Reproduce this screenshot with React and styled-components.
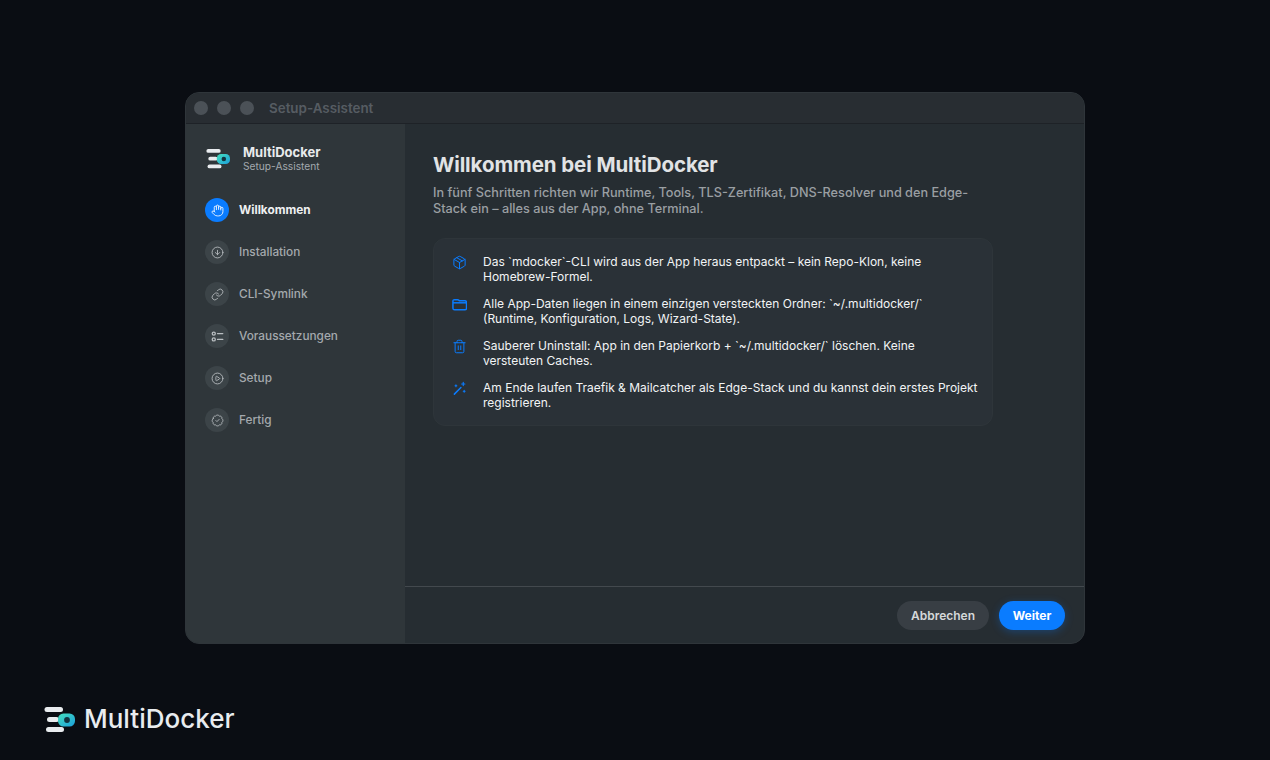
import styled, { createGlobalStyle } from "styled-components";
import {
  Hand,
  CircleArrowDown,
  Link as LinkIcon,
  CirclePlay,
  BadgeCheck,
  Package,
  Trash2,
} from "lucide-react";

// lucide has no match for these three, so they are drawn by hand
const ChecklistIcon = ({ size, strokeWidth }) => (
  <svg width={size} height={size} viewBox="0 0 16 16" fill="none" stroke="currentColor" strokeWidth={strokeWidth} strokeLinecap="round">
    <circle cx="3.4" cy="4.4" r="1.9" />
    <circle cx="3.4" cy="11.6" r="1.9" />
    <path d="M8 4.4h6.5M8 11.6h6.5" />
  </svg>
);

const FolderIcon = ({ size, strokeWidth }) => (
  <svg width={size} height={size} viewBox="0 0 16 16" fill="none" stroke="currentColor" strokeWidth={strokeWidth} strokeLinejoin="round">
    <path d="M1 4.5C1 3.4 1.7 2.8 2.7 2.8h3.2c.7 0 1 .2 1.4.7l.5.6h5.9c1 0 1.8.7 1.8 1.8v6c0 1.1-.8 1.8-1.8 1.8H2.8c-1 0-1.8-.7-1.8-1.8z" />
    <path d="M1 6.2h14" />
  </svg>
);

const WandIcon = ({ size, strokeWidth }) => (
  <svg width={size} height={size} viewBox="0 0 16 16" fill="none" stroke="currentColor" strokeWidth={strokeWidth} strokeLinecap="round">
    <path d="M2.5 14 9.5 7" />
    <path d="M12 1.5v3.4M10.3 3.2h3.4" strokeWidth={strokeWidth * 0.8} />
    <path d="M4.2 4v2M3.2 5h2" strokeWidth={strokeWidth * 0.7} />
    <path d="M13 10v2M12 11h2" strokeWidth={strokeWidth * 0.7} />
  </svg>
);

const STEPS = [
  { name: "Willkommen", icon: Hand },
  { name: "Installation", icon: CircleArrowDown },
  { name: "CLI-Symlink", icon: LinkIcon },
  { name: "Voraussetzungen", icon: ChecklistIcon },
  { name: "Setup", icon: CirclePlay },
  { name: "Fertig", icon: BadgeCheck },
];

const FACTS = [
  {
    icon: Package,
    text: "Das `mdocker`-CLI wird aus der App heraus entpackt – kein Repo-Klon, keine\nHomebrew-Formel.",
  },
  {
    icon: FolderIcon,
    text: "Alle App-Daten liegen in einem einzigen versteckten Ordner: `~/.multidocker/`\n(Runtime, Konfiguration, Logs, Wizard-State).",
  },
  {
    icon: Trash2,
    text: "Sauberer Uninstall: App in den Papierkorb + `~/.multidocker/` löschen. Keine\nversteuten Caches.",
  },
  {
    icon: WandIcon,
    text: "Am Ende laufen Traefik & Mailcatcher als Edge-Stack und du kannst dein erstes Projekt\nregistrieren.",
  },
];

const Logo = ({ width }) => (
  <svg width={width} height={(width * 25) / 31} viewBox="0 0 31 25" fill="none">
    <defs>
      <linearGradient id={`logo-${width}`} x1="0" y1="0" x2="1" y2="1">
        <stop offset="0" stopColor="#45e0bd" />
        <stop offset="1" stopColor="#1b9fdc" />
      </linearGradient>
    </defs>
    <rect x="0.5" y="0" width="18.5" height="5" rx="2.5" fill="#e9ecef" />
    <rect x="3" y="10" width="12" height="5" rx="2.5" fill="#e9ecef" />
    <rect x="2" y="20" width="18" height="5" rx="2.5" fill="#e9ecef" />
    <rect x="14" y="6.5" width="17" height="13" rx="5.5" fill={`url(#logo-${width})`} />
    <circle cx="23" cy="13" r="2.9" fill="#123440" />
  </svg>
);

const App = () => {
  return (
    <>
      <GlobalStyle />
      <Page>
        <Window>
          <TitleBar>
            <Lights>
              <Light />
              <Light />
              <Light />
            </Lights>
            <WindowTitle>Setup-Assistent</WindowTitle>
          </TitleBar>
          <Body>
            <Sidebar>
              <Brand>
                <Logo width={24} />
                <BrandText>
                  <BrandName>MultiDocker</BrandName>
                  <BrandSub>Setup-Assistent</BrandSub>
                </BrandText>
              </Brand>
              <Steps>
                {STEPS.map((step, index) => (
                  <Step key={step.name}>
                    <StepIcon $active={index === 0}>
                      <step.icon size={13} strokeWidth={1.6} />
                    </StepIcon>
                    <StepName $active={index === 0}>{step.name}</StepName>
                  </Step>
                ))}
              </Steps>
            </Sidebar>
            <Main>
              <Content>
                <Title>Willkommen bei MultiDocker</Title>
                <Lead>
                  In fünf Schritten richten wir Runtime, Tools, TLS-Zertifikat,
                  DNS-Resolver und den Edge-Stack ein – alles aus der App, ohne
                  Terminal.
                </Lead>
                <Card>
                  {FACTS.map((fact) => (
                    <Fact key={fact.text}>
                      <FactIcon>
                        <fact.icon size={15} strokeWidth={1.6} />
                      </FactIcon>
                      <FactText>{fact.text}</FactText>
                    </Fact>
                  ))}
                </Card>
              </Content>
              <Footer>
                <CancelButton>Abbrechen</CancelButton>
                <NextButton>Weiter</NextButton>
              </Footer>
            </Main>
          </Body>
        </Window>
        <PageBrand>
          <Logo width={31} />
          <PageBrandName>MultiDocker</PageBrandName>
        </PageBrand>
      </Page>
    </>
  );
};
export default App;

const GlobalStyle = createGlobalStyle`
  html, body {
    margin: 0;
    padding: 0;
    background: #0a0d13;
  }
  * {
    box-sizing: border-box;
  }
  body {
    font-family: Inter, "Liberation Sans", sans-serif;
  }
`;

const Page = styled.div`
  width: 1270px;
  height: 760px;
  padding-top: 92px;
  display: flex;
  flex-direction: column;
  background: #0a0d13;
  overflow: hidden;
`;

const Window = styled.div`
  width: 900px;
  height: 552px;
  align-self: center;
  display: flex;
  flex-direction: column;
  border-radius: 14px;
  overflow: hidden;
  background: #262d32;
  border: 1px solid #2f353a;
`;

const TitleBar = styled.div`
  height: 31px;
  flex-shrink: 0;
  display: flex;
  align-items: center;
  gap: 15px;
  padding: 0 8px;
  background: #282d32;
  border-bottom: 1px solid #1e2227;
`;

const Lights = styled.div`
  display: flex;
  gap: 9px;
`;

const Light = styled.span`
  width: 14px;
  height: 14px;
  border-radius: 50%;
  background: #4b5157;
`;

const WindowTitle = styled.div`
  font-size: 13.4px;
  font-weight: 600;
  color: #565c62;
`;

const Body = styled.div`
  flex: 1;
  display: flex;
  min-height: 0;
`;

const Sidebar = styled.aside`
  width: 219px;
  flex-shrink: 0;
  padding: 0 19px;
  background: #2f363a;
`;

const Brand = styled.div`
  height: 68px;
  margin-bottom: 6px;
  display: flex;
  align-items: center;
  gap: 13px;
  padding-left: 1px;
  padding-top: 2px;
`;

const BrandText = styled.div`
  display: flex;
  flex-direction: column;
`;

const BrandName = styled.div`
  font-size: 13px;
  line-height: 15px;
  font-weight: 700;
  color: #e8eaec;
`;

const BrandSub = styled.div`
  font-size: 10.2px;
  line-height: 13px;
  color: #a3a9ae;
`;

const Steps = styled.div`
  display: flex;
  flex-direction: column;
  gap: 18px;
`;

const Step = styled.div`
  display: flex;
  align-items: center;
  gap: 10px;
  height: 24px;
`;

const StepIcon = styled.span`
  width: 24px;
  height: 24px;
  border-radius: 50%;
  display: flex;
  align-items: center;
  justify-content: center;
  background: ${(props) => (props.$active ? "#0a7cff" : "#3c4448")};
  color: ${(props) => (props.$active ? "#ffffff" : "#b9bec1")};
`;

const StepName = styled.span`
  font-size: 11.8px;
  font-weight: ${(props) => (props.$active ? 700 : 500)};
  color: ${(props) => (props.$active ? "#eef0f1" : "#a4a9ad")};
`;

const Main = styled.main`
  flex: 1;
  display: flex;
  flex-direction: column;
  min-width: 0;
`;

const Content = styled.div`
  flex: 1;
  padding: 28px 28px 0;
`;

const Title = styled.h1`
  margin: 0;
  font-size: 20.5px;
  line-height: 26px;
  font-weight: 700;
  letter-spacing: -0.09px;
  color: #e1e3e5;
`;

const Lead = styled.p`
  margin: 7px 0 0;
  width: 550px;
  font-size: 12.7px;
  line-height: 16px;
  font-weight: 500;
  color: #9a9fa3;
`;

const Card = styled.div`
  width: 560px;
  margin-top: 21px;
  padding: 15px 12px 15px 14px;
  display: flex;
  flex-direction: column;
  gap: 12px;
  border-radius: 12px;
  background: #2a3137;
  border: 1px solid #2e353a;
`;

const Fact = styled.div`
  display: flex;
  gap: 12px;
`;

const FactIcon = styled.span`
  width: 23px;
  height: 16px;
  flex-shrink: 0;
  display: flex;
  align-items: center;
  justify-content: center;
  color: #0a7cff;
`;

const FactText = styled.div`
  font-size: 12px;
  line-height: 15px;
  font-weight: 400;
  white-space: pre-line;
  color: #f2f4f5;
`;

const Footer = styled.div`
  height: 57px;
  flex-shrink: 0;
  display: flex;
  align-items: center;
  justify-content: flex-end;
  gap: 10px;
  padding: 0 19px;
  border-top: 1px solid #43494e;
`;

const CancelButton = styled.button`
  width: 92px;
  height: 29px;
  border: 0;
  border-radius: 15px;
  font-family: inherit;
  font-size: 12px;
  font-weight: 600;
  color: #d5d8da;
  background: #383e44;
`;

const NextButton = styled.button`
  width: 66px;
  height: 29px;
  border: 0;
  border-radius: 15px;
  font-family: inherit;
  font-size: 12px;
  font-weight: 700;
  color: #ffffff;
  background: #0a7cff;
  box-shadow: 0 2px 8px rgba(10, 124, 255, 0.3);
`;

const PageBrand = styled.div`
  display: flex;
  align-items: center;
  gap: 9px;
  margin: 60px 0 0 44px;
`;

const PageBrandName = styled.div`
  font-size: 26px;
  line-height: 30px;
  font-weight: 500;
  color: #e9ecef;
`;
